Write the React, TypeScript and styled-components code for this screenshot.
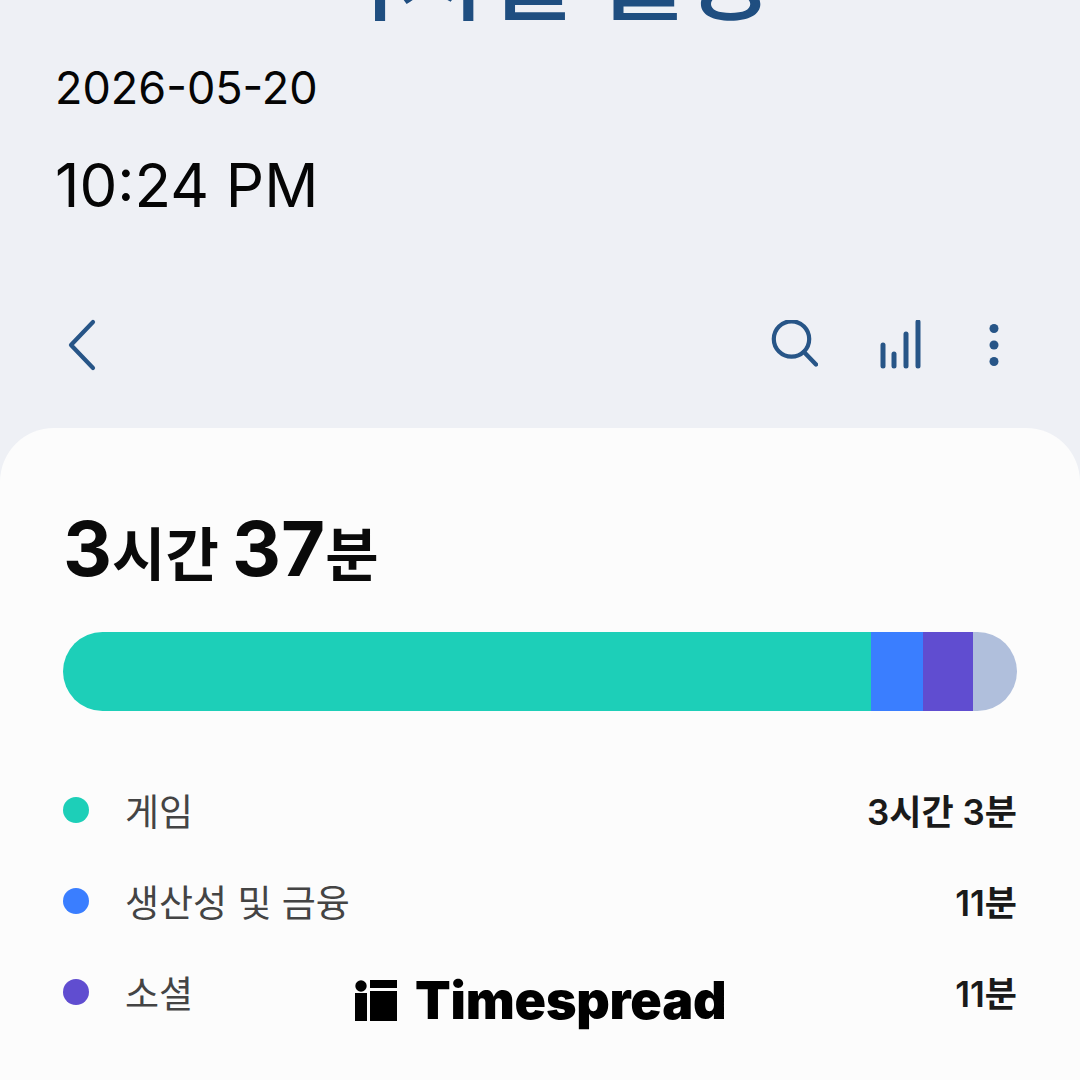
import styled, { createGlobalStyle } from 'styled-components'

const GlobalStyle = createGlobalStyle`
    html, body {
        margin: 0;
        padding: 0;
        background: #eef0f5;
    }
    body {
        font-family: 'Inter', 'Noto Sans CJK KR', sans-serif;
    }
`

const Page = styled.div`
    position: relative;
    width: 1080px;
    height: 1080px;
    overflow: hidden;
    background: #eef0f5;
`

const PageTitle = styled.h1`
    margin: -78px 0 0;
    height: 100px;
    text-align: center;
    font-family: 'Noto Sans CJK KR', sans-serif;
    font-size: 96px;
    line-height: 98px;
    font-weight: 500;
    color: #1f4e80;
`

const Stamp = styled.div`
    padding-left: 55px;
    color: #050505;
`

const StampDate = styled.div`
    margin-top: 36px;
    font-size: 45px;
    line-height: 60px;
`

const StampTime = styled.div`
    margin-top: 31px;
    font-size: 60px;
    line-height: 72px;
`

const Toolbar = styled.div`
    display: flex;
    align-items: center;
    justify-content: space-between;
    margin-top: 94px;
    padding: 0 78px 0 65px;
    height: 60px;
`

const ToolGroup = styled.div`
    display: flex;
    align-items: center;
    gap: 60px;
`

const Card = styled.section`
    margin-top: 53px;
    height: 720px;
    padding: 82px 63px 0;
    background: #fcfcfc;
    border-radius: 54px 54px 0 0;
`

const Total = styled.div`
    display: flex;
    align-items: baseline;
    color: #0a0a0a;
    font-weight: 700;
    height: 76px;
    line-height: 76px;
`

const TotalNumber = styled.span`
    font-size: 76px;
`

const TotalUnit = styled.span`
    font-size: 58px;
    font-family: 'Noto Sans CJK KR', sans-serif;
`

const Bar = styled.div`
    display: flex;
    height: 79px;
    margin-top: 46px;
    border-radius: 40px;
    overflow: hidden;
`

const BarPart = styled.div<{ $color: string; $width: number }>`
    width: ${p => p.$width}px;
    background: ${p => p.$color};
    flex: ${p => (p.$width ? 'none' : '1')};
`

const Legend = styled.div`
    margin-top: 76px;
    display: flex;
    flex-direction: column;
    gap: 46px;
`

const LegendRow = styled.div`
    display: flex;
    align-items: center;
    height: 45px;
`

const Dot = styled.span<{ $color: string }>`
    width: 26px;
    height: 26px;
    border-radius: 50%;
    margin-right: 36px;
    background: ${p => p.$color};
`

const LegendName = styled.span`
    flex: 1;
    font-family: 'Noto Sans CJK KR', sans-serif;
    font-size: 37px;
    word-spacing: 2px;
    color: #444;
`

const LegendValue = styled.span`
    font-size: 35px;
    font-weight: 600;
    color: #1a1a1a;
`

const Watermark = styled.div`
    position: absolute;
    left: 355px;
    top: 972px;
    display: flex;
    align-items: center;
    gap: 18px;
    color: #000;
`

const WatermarkText = styled.span`
    font-size: 52px;
    line-height: 58px;
    font-weight: 900;
    letter-spacing: -0.2px;
`

const iconColor = '#275587'

const BackIcon = () => (
    <svg width="32" height="52" viewBox="0 0 32 52" fill="none">
        <path d="M28 3 L6 26 L28 49" stroke={iconColor} strokeWidth="4.2" strokeLinecap="round" strokeLinejoin="round" />
    </svg>
)

const SearchIcon = () => (
    <svg width="48" height="50" viewBox="0 0 48 50" fill="none">
        <circle cx="21.5" cy="19" r="17.7" stroke={iconColor} strokeWidth="4.2" />
        <path d="M34 32 L46 44.5" stroke={iconColor} strokeWidth="4.4" strokeLinecap="round" />
    </svg>
)

const StatsIcon = () => (
    <svg width="48" height="50" viewBox="0 0 48 50" fill="none" stroke={iconColor} strokeWidth="5" strokeLinecap="round">
        <path d="M5 25 V46" />
        <path d="M16 34 V46" />
        <path d="M28 14 V46" />
        <path d="M40 2 V46" />
    </svg>
)

const MoreIcon = () => (
    <svg width="16" height="44" viewBox="0 0 16 44" fill={iconColor}>
        <circle cx="8" cy="5.5" r="4.5" />
        <circle cx="8" cy="22" r="4.5" />
        <circle cx="8" cy="38.5" r="4.5" />
    </svg>
)

const LogoMark = () => (
    <svg width="42" height="42" viewBox="0 0 42 42" fill="#000">
        <circle cx="6" cy="6" r="5.7" />
        <rect x="0" y="13" width="12" height="28" />
        <rect x="15" y="0" width="27" height="8" />
        <rect x="15" y="11" width="27" height="30" />
    </svg>
)

const legend = [
    { name: '게임', value: '3시간 3분', color: '#1dcfb8' },
    { name: '생산성 및 금융', value: '11분', color: '#3a7eff' },
    { name: '소셜', value: '11분', color: '#604dd0' },
]

export default function App() {
    return (
        <Page>
            <GlobalStyle />
            <PageTitle>디지털 웰빙</PageTitle>
            <Stamp>
                <StampDate>2026-05-20</StampDate>
                <StampTime>10:24 PM</StampTime>
            </Stamp>
            <Toolbar>
                <BackIcon />
                <ToolGroup>
                    <SearchIcon />
                    <StatsIcon />
                    <MoreIcon />
                </ToolGroup>
            </Toolbar>
            <Card>
                <Total>
                    <TotalNumber>3</TotalNumber>
                    <TotalUnit>시간&nbsp;</TotalUnit>
                    <TotalNumber>37</TotalNumber>
                    <TotalUnit>분</TotalUnit>
                </Total>
                <Bar>
                    <BarPart $color="#1dcfb8" $width={808} />
                    <BarPart $color="#3a7eff" $width={52} />
                    <BarPart $color="#604dd0" $width={50} />
                    <BarPart $color="#b0bfdc" $width={0} />
                </Bar>
                <Legend>
                    {legend.map(item => (
                        <LegendRow key={item.name}>
                            <Dot $color={item.color} />
                            <LegendName>{item.name}</LegendName>
                            <LegendValue>{item.value}</LegendValue>
                        </LegendRow>
                    ))}
                </Legend>
            </Card>
            <Watermark>
                <LogoMark />
                <WatermarkText>Timespread</WatermarkText>
            </Watermark>
        </Page>
    )
}
